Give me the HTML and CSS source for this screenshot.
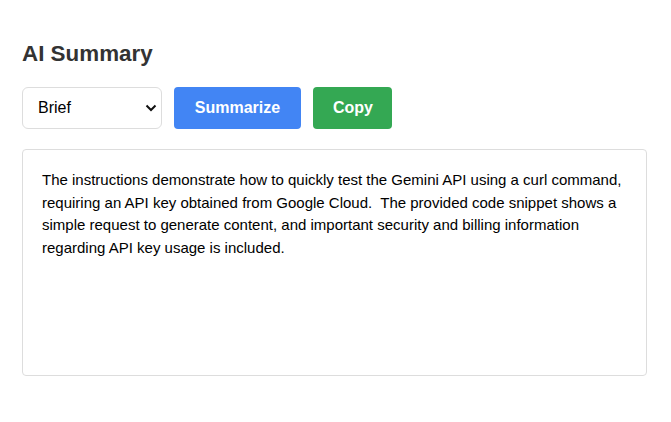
FILE: index.html
```html
<!DOCTYPE html>
<html>
<head>
<meta charset="utf-8">
<link rel="stylesheet" href="styles.css">
</head>
<body>
<div class="panel">
  <h2 class="title">AI Summary</h2>
  <div class="controls">
    <div class="select">
      <span class="select-value">Brief</span>
      <svg class="chev" width="12" height="8" viewBox="0 0 12 8"><path d="M1.5 1.5 L6 6 L10.5 1.5" fill="none" stroke="#111" stroke-width="2"/></svg>
    </div>
    <button class="btn btn-blue">Summarize</button>
    <button class="btn btn-green">Copy</button>
  </div>
  <div class="output">The instructions demonstrate how to quickly test the Gemini API using a curl command, requiring an API key obtained from Google Cloud.  The provided code snippet shows a simple request to generate content, and important security and billing information regarding API key usage is included.</div>
</div>
</body>
</html>
```
FILE: styles.css
```css
html, body { margin: 0; padding: 0; background: #fff; }
body { font-family: "Liberation Sans", Arial, sans-serif; }
.panel { padding: 20px 24px 0 22px; }
.title { margin: 21px 0 0 0; font-size: 22.4px; font-weight: bold; color: #333; line-height: 26px; }
.controls { display: flex; gap: 12px; margin-top: 20px; }
.select {
  box-sizing: border-box; width: 140px; height: 42px;
  border: 1px solid #ddd; border-radius: 6px; background: #fff;
  display: flex; align-items: center; justify-content: space-between;
  padding: 0 3px 0 15px; font-size: 16px; color: #000;
}
.chev { margin-right: 1px; }
.btn {
  height: 42px; border: none; border-radius: 4px; color: #fff;
  font-family: "Liberation Sans", Arial, sans-serif; font-size: 16px; font-weight: bold;
  padding: 0 20px;
}
.btn-blue { background: #4285f4; width: 127px; }
.btn-green { background: #34a853; width: 79px; }
.output {
  box-sizing: border-box; margin-top: 20px; height: 227px;
  border: 1px solid #ddd; border-radius: 4px; padding: 19px 19px;
  font-size: 15px; line-height: 22.5px; color: #000; white-space: pre-wrap;
}
```
